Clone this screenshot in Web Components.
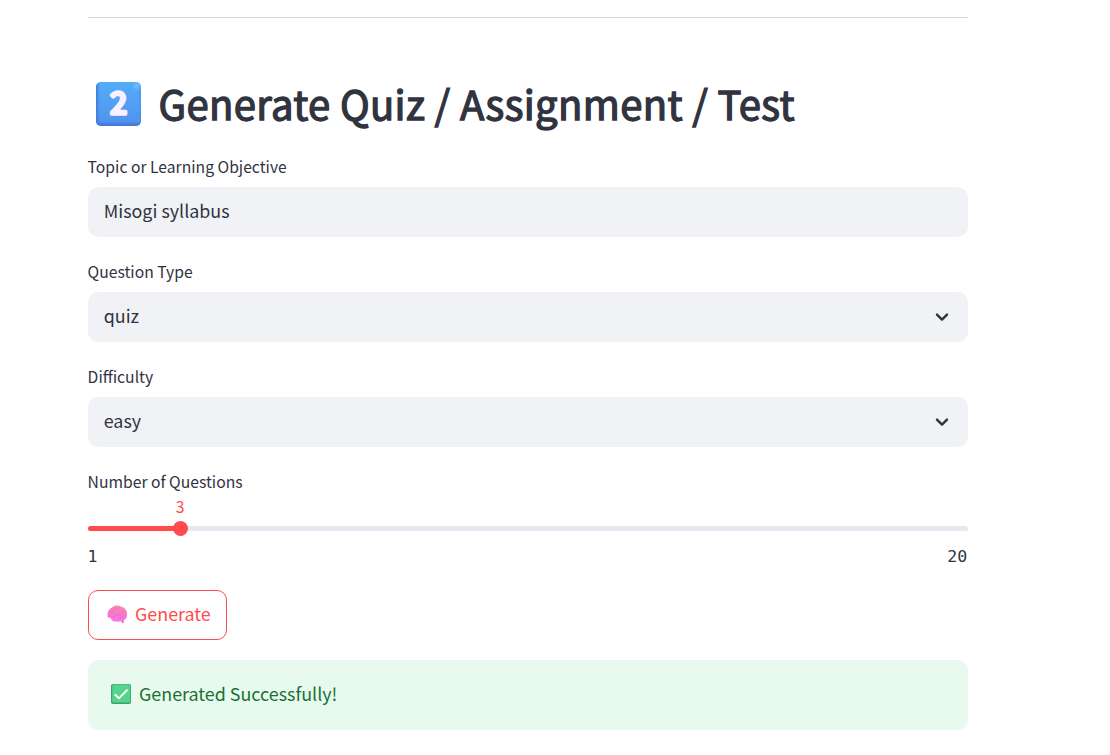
<!DOCTYPE html>
<html lang="en">
<head>
<meta charset="utf-8">
<title>Quiz Generator</title>
<style>
  body { margin: 0; background: #fff; color: #31333f; font-family: "Noto Sans CJK JP", "Noto Sans", sans-serif; }
</style>
</head>
<body>
<quiz-page>
  <page-heading><key-two slot="icon"></key-two>Generate Quiz / Assignment / Test</page-heading>
  <form-field label="Topic or Learning Objective">Misogi syllabus</form-field>
  <form-field label="Question Type" select>quiz</form-field>
  <form-field label="Difficulty" select>easy</form-field>
  <range-slider label="Number of Questions" min="1" max="20" value="3"></range-slider>
  <outline-button><brain-icon slot="icon"></brain-icon>Generate</outline-button>
  <success-alert><check-icon slot="icon"></check-icon>Generated Successfully!</success-alert>
</quiz-page>
<script>
const define = (name, html, setup) => customElements.define(name, class extends HTMLElement {
  connectedCallback() {
    if (this.shadowRoot) return;
    this.attachShadow({ mode: 'open' }).innerHTML = html;
    if (setup) setup(this, this.shadowRoot);
  }
});

define('quiz-page', `
  <style>
    :host { display: flex; flex-direction: column; width: 880px; margin-left: 88px; padding-top: 17px; }
    .rule { height: 1px; background: #d6d6d9; margin-bottom: 52px; }
  </style>
  <div class="rule"></div><slot></slot>`);

define('page-heading', `
  <style>
    :host { display: block; }
    h2 { display: flex; align-items: center; height: 68px; margin: 0 0 19px; padding-left: 8px; gap: 17.5px; box-sizing: border-box;
      font-size: 40px; line-height: 68px; font-weight: 400; -webkit-text-stroke: 1.3px currentColor; letter-spacing: .35px; white-space: nowrap; }
    .t { margin-top: -2px; }
  </style>
  <h2><slot name="icon"></slot><span class="t"><slot></slot></span></h2>`);

define('key-two', `
  <style>:host { display: block; width: 45px; height: 44px; -webkit-text-stroke: 0; letter-spacing: 0; } svg { display: block; }</style>
  <svg width="45" height="44" viewBox="0 0 45 44" overflow="visible">
    <defs>
      <linearGradient id="g" x1="0" y1="0" x2="0" y2="1"><stop offset="0" stop-color="#54acfb"/><stop offset="1" stop-color="#5092ec"/></linearGradient>
      <linearGradient id="l"><stop offset="0" stop-color="#3d7ddb"/><stop offset="1" stop-color="#3d7ddb" stop-opacity="0"/></linearGradient>
      <linearGradient id="b" x1="0" y1="1" x2="0" y2="0"><stop offset="0" stop-color="#4370d6"/><stop offset="1" stop-color="#4370d6" stop-opacity="0"/></linearGradient>
      <radialGradient id="h"><stop offset="0" stop-color="#72c8ff" stop-opacity=".8"/><stop offset="1" stop-color="#72c8ff" stop-opacity="0"/></radialGradient>
      <clipPath id="c"><rect width="45" height="44" rx="5"/></clipPath>
    </defs>
    <g clip-path="url(#c)">
      <rect width="45" height="44" fill="url(#g)"/>
      <rect width="4" height="44" fill="url(#l)"/>
      <rect y="39" width="45" height="5" fill="url(#b)"/>
      <rect x="43" width="2" height="44" fill="#478be5" opacity=".4"/>
      <circle cx="41" cy="4" r="5" fill="url(#h)"/>
    </g>
    <text x="22.7" y="32.3" text-anchor="middle" font-family="Noto Sans CJK JP, sans-serif" font-size="30" font-weight="400" fill="#faf0ff" style="-webkit-text-stroke:0" stroke="#faf0ff" stroke-width="3.6" stroke-linejoin="round">2</text>
  </svg>`);

define('form-field', `
  <style>
    :host { display: block; margin-bottom: 25px; }
    .label { height: 30px; font-size: 15.7px; line-height: 20px; margin-left: -.4px; }
    .box { display: flex; align-items: center; justify-content: space-between; height: 50px; padding: 0 16px; box-sizing: border-box;
      border-radius: 10px; background: #f0f2f6; font-size: 17.9px; line-height: 46px; }
    .box span { height: 50px; margin-left: -.3px; }
    svg { display: none; }
    :host([select]) svg { display: block; }
  </style>
  <div class="label"></div>
  <div class="box"><span><slot></slot></span>
    <svg width="20" height="20" viewBox="0 0 20 20" fill="none" stroke="#31333f" stroke-width="2.4" stroke-linecap="round" stroke-linejoin="round"><path d="M5 7.6 10 12.6 15 7.6"/></svg>
  </div>`, (el, root) => { root.querySelector('.label').textContent = el.getAttribute('label'); });

define('range-slider', `
  <style>
    :host { display: block; height: 118px; margin-bottom: 0; }
    .label { height: 30px; font-size: 15.7px; line-height: 20px; margin-left: -.4px; }
    .track { position: relative; height: 5px; margin-top: 24px; border-radius: 3px; background: #e4e8f0; }
    .fill { width: var(--at); height: 5px; border-radius: 3px 0 0 3px; background: #ff4b4b; }
    .thumb { position: absolute; left: var(--at); top: -5px; width: 15px; height: 15px; margin-left: -7.5px; border-radius: 50%; background: #ff4b4b; }
    .value { position: absolute; left: var(--at); top: -30px; margin-left: -.6px; transform: translateX(-50%); font-size: 15.7px; line-height: 22px; color: #ff4b4b; }
    .ends { display: flex; justify-content: space-between; margin: 15px .8px 0 -.4px; font: 16.6px/22px "DejaVu Sans Mono", monospace; }
  </style>
  <div class="label"></div>
  <div class="track"><div class="fill"></div><div class="thumb"></div><div class="value"></div></div>
  <div class="ends"><span class="min"></span><span class="max"></span></div>`, (el, root) => {
    const get = n => el.getAttribute(n);
    root.querySelector('.label').textContent = get('label');
    for (const n of ['min', 'max', 'value']) root.querySelector('.' + n).textContent = get(n);
    el.style.setProperty('--at', (get('value') - get('min')) / (get('max') - get('min')) * 100 + '%');
  });

define('outline-button', `
  <style>
    :host { display: block; height: 50px; margin-bottom: 20px; }
    button { display: flex; align-items: center; gap: 7px; width: 139px; height: 50px; padding: 0 0 0 18px; box-sizing: border-box;
      border: 1px solid #ff4b4b; border-radius: 10px; background: #fff; color: #ff4b4b; font: 17.9px/44px "Noto Sans CJK JP", sans-serif; white-space: nowrap; }
    span { height: 48px; }
  </style>
  <button><slot name="icon"></slot><span><slot></slot></span></button>`);

define('brain-icon', `
  <style>:host { display: block; width: 21px; height: 20px; } svg { display: block; }</style>
  <svg width="21" height="20" viewBox="0 0 21 20">
    <defs><linearGradient id="p" x1=".6" y1="0" x2=".4" y2="1"><stop offset="0" stop-color="#f58bb0"/><stop offset=".55" stop-color="#f578ca"/><stop offset="1" stop-color="#fb74ec"/></linearGradient></defs>
    <path d="M13.4 14.5 15.2 18.2 Q17 18.7 16.8 16.5 L16.3 14Z" fill="#ea66d0"/>
    <path d="M.8 12.2C-.2 8.5 1.2 4.4 4.6 2.7 7.4.1 11.5.2 14 1.4 18 2.2 20.1 5.3 19.9 8.3 20.7 12 18.5 15.4 15.4 15.5 13 17 10 16.8 8.6 16.3 6.2 17 4.3 15.5 4.1 13.5 3.2 12.5 2 12.8 .8 12.2Z" fill="url(#p)"/>
    <g fill="none" stroke="#e45bb8" stroke-width=".9" stroke-linecap="round" opacity=".5"><path d="M4 7.6Q5 5.5 7.2 5.6M8.2 4Q10 2.7 11.8 4M5 12Q8 12.7 9 10.6 11 8.7 13.4 9.8M14.4 7.1Q16.2 6.1 17.3 7.9M11.8 13Q14.5 14 16.2 12.3"/></g>
  </svg>`);

define('success-alert', `
  <style>
    :host { display: flex; align-items: center; gap: 8px; height: 70px; padding: 0 0 2px 23px; box-sizing: border-box; border-radius: 10px;
      background: #e8f9ee; color: #177233; font-size: 17.9px; line-height: 66px; }
    span { height: 68px; }
  </style>
  <slot name="icon"></slot><span><slot></slot></span>`);

define('check-icon', `
  <style>:host { display: block; width: 20px; height: 20px; } svg { display: block; }</style>
  <svg width="20" height="20" viewBox="0 0 20 20">
    <rect width="20" height="20" rx="2" fill="#3ca36e"/>
    <rect x="1.2" y=".6" width="18" height="18" rx="1.6" fill="#56d38c"/>
    <path d="M4.2 10.8 7.9 14.3 16 6.2" fill="none" stroke="#fff" stroke-width="1.9" stroke-linecap="round" stroke-linejoin="round"/>
  </svg>`);
</script>
</body>
</html>
